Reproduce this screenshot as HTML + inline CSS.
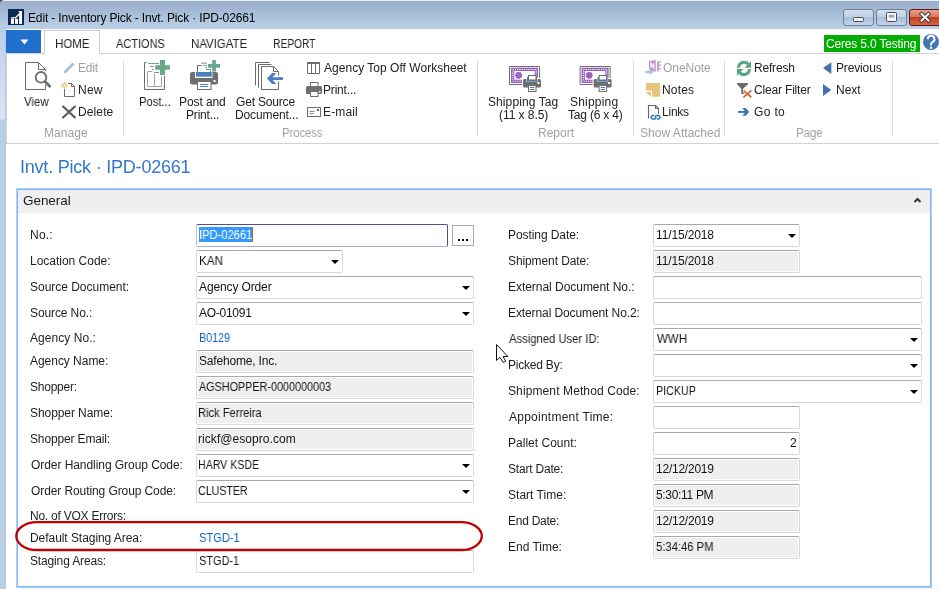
<!DOCTYPE html>
<html><head><meta charset="utf-8"><style>
html,body{margin:0;padding:0;}
body{width:939px;height:589px;position:relative;overflow:hidden;background:#fff;font-family:"Liberation Sans",sans-serif;}
.tx{position:absolute;white-space:pre;line-height:40px;height:40px;font-family:"Liberation Sans",sans-serif;will-change:transform;}
.abs{position:absolute;}
.fb{position:absolute;box-sizing:border-box;border:1px solid #d5d8e0;border-top-color:#a9a9a9;border-radius:2px;background:#fff;}
.fg{background:#efefef;box-shadow:inset 0 0 0 1px #fff;}
.ff{border-color:#4f4f98;border-bottom-color:#b0a8d4;border-left-color:#c0bce0;}
.arr{position:absolute;width:0;height:0;border-left:4px solid transparent;border-right:4px solid transparent;border-top:4.5px solid #000;}
</style></head><body>
<!-- title bar -->
<div class="abs" style="left:0;top:0;width:939px;height:29px;background:linear-gradient(#95acc7,#a7bcd6 45%,#b6cce4 85%,#b9d0e8);"></div>
<div class="abs" style="left:3px;top:0;width:936px;height:1px;background:#eef1f4;"></div>
<!-- left frame -->
<div class="abs" style="left:0;top:29px;width:6px;height:560px;background:linear-gradient(#bacfe8 0px,#dae6f3 90px,#b9cde5 91px,#b9cde5 560px);"></div>
<div class="abs" style="left:5px;top:29px;width:1px;height:560px;background:#b4cbe6;"></div>
<!-- tab bar -->
<div class="abs" style="left:6px;top:29px;width:933px;height:115px;background:#fff;"></div>
<div class="abs" style="left:6px;top:53px;width:933px;height:1px;background:#d4d4d4;"></div>
<div class="abs" style="left:6px;top:30px;width:35px;height:23px;background:#1f6fcd;"></div>
<div class="abs" style="left:44px;top:30px;width:56px;height:24px;box-sizing:border-box;border:1px solid #cfcfcf;border-bottom:none;background:#fff;"></div>
<div class="abs" style="left:824px;top:35px;width:96px;height:17px;background:#00ad00;"></div>
<!-- ribbon -->
<div class="abs" style="left:6px;top:53px;width:1px;height:91px;background:#d4d4d4;"></div>
<div class="abs" style="left:6px;top:143px;width:933px;height:1px;background:#d2d2d2;"></div>
<div class="abs" style="left:123px;top:61px;width:1px;height:75px;background:#d6d6d6;"></div>
<div class="abs" style="left:477px;top:61px;width:1px;height:75px;background:#d6d6d6;"></div>
<div class="abs" style="left:633px;top:61px;width:1px;height:75px;background:#d6d6d6;"></div>
<div class="abs" style="left:724px;top:61px;width:1px;height:75px;background:#d6d6d6;"></div>
<div class="abs" style="left:892px;top:61px;width:1px;height:75px;background:#d6d6d6;"></div>
<!-- panel -->
<div class="abs" style="left:16px;top:188px;width:916px;height:400px;background:#b2d1f9;"></div>
<div class="abs" style="left:17px;top:189px;width:914px;height:398px;box-sizing:border-box;border:1px solid #7fb3f6;background:#fff;"></div>
<div class="abs" style="left:16px;top:588px;width:923px;height:1px;background:#f0f0f0;"></div>
<div class="abs" style="left:18px;top:190px;width:912px;height:23px;background:#efefef;"></div>
<!-- selection -->
<div class='fb ff' style='left:196px;top:224px;width:252px;height:23px'></div>
<div class='fb' style='left:196px;top:250px;width:147px;height:23px'></div><div class='arr' style='left:330.5px;top:259.7px'></div>
<div class='fb' style='left:196px;top:276px;width:278px;height:23px'></div><div class='arr' style='left:461.5px;top:285.7px'></div>
<div class='fb' style='left:196px;top:302px;width:278px;height:23px'></div><div class='arr' style='left:461.5px;top:311.7px'></div>
<div class='fb fg' style='left:196px;top:350px;width:278px;height:23px'></div>
<div class='fb fg' style='left:196px;top:376px;width:278px;height:23px'></div>
<div class='fb fg' style='left:196px;top:402px;width:278px;height:23px'></div>
<div class='fb fg' style='left:196px;top:428px;width:278px;height:23px'></div>
<div class='fb' style='left:196px;top:454px;width:278px;height:23px'></div><div class='arr' style='left:461.5px;top:463.7px'></div>
<div class='fb' style='left:196px;top:480px;width:278px;height:23px'></div><div class='arr' style='left:461.5px;top:489.7px'></div>
<div class='fb' style='left:196px;top:550px;width:278px;height:23px'></div>
<div class='fb' style='left:653px;top:224px;width:147px;height:23px'></div><div class='arr' style='left:787.5px;top:233.7px'></div>
<div class='fb fg' style='left:653px;top:250px;width:147px;height:23px'></div>
<div class='fb' style='left:653px;top:276px;width:269px;height:23px'></div>
<div class='fb' style='left:653px;top:302px;width:269px;height:23px'></div>
<div class='fb' style='left:653px;top:328px;width:269px;height:23px'></div><div class='arr' style='left:909.5px;top:337.7px'></div>
<div class='fb' style='left:653px;top:354px;width:269px;height:23px'></div><div class='arr' style='left:909.5px;top:363.7px'></div>
<div class='fb' style='left:653px;top:380px;width:269px;height:23px'></div><div class='arr' style='left:909.5px;top:389.7px'></div>
<div class='fb' style='left:653px;top:406px;width:147px;height:23px'></div>
<div class='fb' style='left:653px;top:432px;width:147px;height:23px'></div>
<div class='fb fg' style='left:653px;top:458px;width:147px;height:23px'></div>
<div class='fb fg' style='left:653px;top:484px;width:147px;height:23px'></div>
<div class='fb fg' style='left:653px;top:510px;width:147px;height:23px'></div>
<div class='fb fg' style='left:653px;top:536px;width:147px;height:23px'></div>
<div class="abs" style="left:198.7px;top:227px;width:54px;height:15px;background:#3399ff;"></div>
<div class="abs" style="left:452px;top:225px;width:22px;height:21px;box-sizing:border-box;border:1px solid #ababab;background:#fff;"></div>
<div class='tx' style='left:27.50px;top:-2.16px;font-size:12px;color:#000;letter-spacing:-0.149px;'>Edit - Inventory Pick - Invt. Pick · IPD-02661</div>
<div class='tx' style='left:54.80px;top:23.84px;font-size:12px;color:#222;transform:scaleX(0.9543);transform-origin:1px 0;'>HOME</div>
<div class='tx' style='left:115.90px;top:23.84px;font-size:12px;color:#222;transform:scaleX(0.9151);transform-origin:0px 0;'>ACTIONS</div>
<div class='tx' style='left:190.80px;top:23.84px;font-size:12px;color:#222;transform:scaleX(0.9517);transform-origin:1px 0;'>NAVIGATE</div>
<div class='tx' style='left:272.90px;top:23.84px;font-size:12px;color:#222;transform:scaleX(0.8490);transform-origin:1px 0;'>REPORT</div>
<div class='tx' style='left:826.10px;top:23.84px;font-size:12px;color:#fff;letter-spacing:-0.169px;'>Ceres 5.0 Testing</div>
<div class='tx' style='left:23.70px;top:81.84px;font-size:12px;color:#222;transform:scaleX(0.9500);transform-origin:0px 0;'>View</div>
<div class='tx' style='left:78.40px;top:47.84px;font-size:12px;color:#a0a0a0;letter-spacing:-0.233px;'>Edit</div>
<div class='tx' style='left:78.40px;top:69.84px;font-size:12px;color:#222;letter-spacing:0.250px;'>New</div>
<div class='tx' style='left:78.40px;top:91.84px;font-size:12px;color:#222;letter-spacing:0.120px;'>Delete</div>
<div class='tx' style='left:43.80px;top:112.84px;font-size:12px;color:#a0a0a0;letter-spacing:0.040px;'>Manage</div>
<div class='tx' style='left:138.80px;top:81.84px;font-size:12px;color:#222;transform:scaleX(0.9281);transform-origin:1px 0;'>Post...</div>
<div class='tx' style='left:178.60px;top:81.84px;font-size:12px;color:#222;letter-spacing:-0.086px;'>Post and</div>
<div class='tx' style='left:186.30px;top:94.84px;font-size:12px;color:#222;letter-spacing:-0.186px;'>Print...</div>
<div class='tx' style='left:235.60px;top:81.84px;font-size:12px;color:#222;letter-spacing:-0.178px;'>Get Source</div>
<div class='tx' style='left:234.60px;top:94.84px;font-size:12px;color:#222;letter-spacing:-0.110px;'>Document...</div>
<div class='tx' style='left:281.70px;top:112.84px;font-size:12px;color:#a0a0a0;transform:scaleX(0.9310);transform-origin:1px 0;'>Process</div>
<div class='tx' style='left:324.00px;top:47.84px;font-size:12px;color:#222;letter-spacing:0.026px;'>Agency Top Off Worksheet</div>
<div class='tx' style='left:323.00px;top:69.84px;font-size:12px;color:#222;letter-spacing:-0.186px;'>Print...</div>
<div class='tx' style='left:323.00px;top:91.84px;font-size:12px;color:#222;letter-spacing:0.140px;'>E-mail</div>
<div class='tx' style='left:487.70px;top:81.84px;font-size:12px;color:#222;letter-spacing:0.091px;'>Shipping Tag</div>
<div class='tx' style='left:499.40px;top:94.84px;font-size:12px;color:#222;letter-spacing:-0.056px;'>(11 x 8.5)</div>
<div class='tx' style='left:570.00px;top:81.84px;font-size:12px;color:#222;letter-spacing:0.200px;'>Shipping</div>
<div class='tx' style='left:568.00px;top:94.84px;font-size:12px;color:#222;letter-spacing:-0.200px;'>Tag (6 x 4)</div>
<div class='tx' style='left:538.30px;top:112.84px;font-size:12px;color:#a0a0a0;letter-spacing:0.000px;'>Report</div>
<div class='tx' style='left:662.70px;top:47.84px;font-size:12px;color:#a0a0a0;letter-spacing:-0.050px;'>OneNote</div>
<div class='tx' style='left:661.70px;top:69.84px;font-size:12px;color:#222;letter-spacing:0.175px;'>Notes</div>
<div class='tx' style='left:661.70px;top:91.84px;font-size:12px;color:#222;letter-spacing:-0.225px;'>Links</div>
<div class='tx' style='left:639.60px;top:112.84px;font-size:12px;color:#a0a0a0;letter-spacing:0.033px;'>Show Attached</div>
<div class='tx' style='left:753.50px;top:47.84px;font-size:12px;color:#222;letter-spacing:-0.183px;'>Refresh</div>
<div class='tx' style='left:753.50px;top:69.84px;font-size:12px;color:#222;letter-spacing:-0.173px;'>Clear Filter</div>
<div class='tx' style='left:753.50px;top:91.84px;font-size:12px;color:#222;letter-spacing:0.350px;'>Go to</div>
<div class='tx' style='left:836.30px;top:47.84px;font-size:12px;color:#222;letter-spacing:-0.143px;'>Previous</div>
<div class='tx' style='left:836.30px;top:69.84px;font-size:12px;color:#222;letter-spacing:0.000px;'>Next</div>
<div class='tx' style='left:796.40px;top:112.84px;font-size:12px;color:#a0a0a0;transform:scaleX(0.9481);transform-origin:1px 0;'>Page</div>
<div class='tx' style='left:19.50px;top:146.76px;font-size:18px;color:#3279cc;letter-spacing:-0.214px;'>Invt. Pick · IPD-02661</div>
<div class='tx' style='left:22.80px;top:181.32px;font-size:13.5px;color:#1a1a1a;letter-spacing:-0.050px;'>General</div>
<div class='tx' style='left:29.50px;top:214.84px;font-size:12px;color:#1e1e1e;letter-spacing:0.233px;'>No.:</div>
<div class='tx' style='left:29.50px;top:240.84px;font-size:12px;color:#1e1e1e;letter-spacing:-0.015px;'>Location Code:</div>
<div class='tx' style='left:29.50px;top:266.84px;font-size:12px;color:#1e1e1e;letter-spacing:-0.020px;'>Source Document:</div>
<div class='tx' style='left:29.50px;top:292.84px;font-size:12px;color:#1e1e1e;letter-spacing:-0.110px;'>Source No.:</div>
<div class='tx' style='left:29.80px;top:317.84px;font-size:12px;color:#1e1e1e;letter-spacing:0.050px;'>Agency No.:</div>
<div class='tx' style='left:29.80px;top:340.84px;font-size:12px;color:#1e1e1e;letter-spacing:-0.036px;'>Agency Name:</div>
<div class='tx' style='left:29.50px;top:366.84px;font-size:12px;color:#1e1e1e;letter-spacing:-0.229px;'>Shopper:</div>
<div class='tx' style='left:29.50px;top:392.84px;font-size:12px;color:#1e1e1e;letter-spacing:-0.075px;'>Shopper Name:</div>
<div class='tx' style='left:29.50px;top:418.84px;font-size:12px;color:#1e1e1e;letter-spacing:-0.146px;'>Shopper Email:</div>
<div class='tx' style='left:30.50px;top:444.84px;font-size:12px;color:#1e1e1e;letter-spacing:-0.060px;'>Order Handling Group Code:</div>
<div class='tx' style='left:30.50px;top:470.84px;font-size:12px;color:#1e1e1e;letter-spacing:-0.092px;'>Order Routing Group Code:</div>
<div class='tx' style='left:29.50px;top:495.84px;font-size:12px;color:#1e1e1e;letter-spacing:-0.235px;'>No. of VOX Errors:</div>
<div class='tx' style='left:29.50px;top:517.84px;font-size:12px;color:#1e1e1e;letter-spacing:-0.055px;'>Default Staging Area:</div>
<div class='tx' style='left:29.50px;top:540.84px;font-size:12px;color:#1e1e1e;letter-spacing:-0.146px;'>Staging Areas:</div>
<div class='tx' style='left:507.90px;top:214.84px;font-size:12px;color:#1e1e1e;letter-spacing:-0.075px;'>Posting Date:</div>
<div class='tx' style='left:507.90px;top:240.84px;font-size:12px;color:#1e1e1e;letter-spacing:-0.100px;'>Shipment Date:</div>
<div class='tx' style='left:507.90px;top:266.84px;font-size:12px;color:#1e1e1e;letter-spacing:-0.038px;'>External Document No.:</div>
<div class='tx' style='left:507.90px;top:292.84px;font-size:12px;color:#1e1e1e;letter-spacing:-0.100px;'>External Document No.2:</div>
<div class='tx' style='left:508.90px;top:318.84px;font-size:12px;color:#1e1e1e;transform:scaleX(0.9375);transform-origin:0px 0;'>Assigned User ID:</div>
<div class='tx' style='left:507.90px;top:344.84px;font-size:12px;color:#1e1e1e;letter-spacing:-0.211px;'>Picked By:</div>
<div class='tx' style='left:507.90px;top:370.84px;font-size:12px;color:#1e1e1e;letter-spacing:0.110px;'>Shipment Method Code:</div>
<div class='tx' style='left:508.90px;top:396.84px;font-size:12px;color:#1e1e1e;letter-spacing:0.250px;'>Appointment Time:</div>
<div class='tx' style='left:507.90px;top:422.84px;font-size:12px;color:#1e1e1e;letter-spacing:0.017px;'>Pallet Count:</div>
<div class='tx' style='left:507.90px;top:448.84px;font-size:12px;color:#1e1e1e;letter-spacing:-0.200px;'>Start Date:</div>
<div class='tx' style='left:507.90px;top:474.84px;font-size:12px;color:#1e1e1e;letter-spacing:0.020px;'>Start Time:</div>
<div class='tx' style='left:507.90px;top:500.84px;font-size:12px;color:#1e1e1e;letter-spacing:-0.263px;'>End Date:</div>
<div class='tx' style='left:507.90px;top:526.84px;font-size:12px;color:#1e1e1e;letter-spacing:-0.013px;'>End Time:</div>
<div class='tx' style='left:198.50px;top:214.84px;font-size:12px;color:#fff;transform:scaleX(0.9286);transform-origin:1px 0;'>IPD-02661</div>
<div class='tx' style='left:198.80px;top:240.84px;font-size:12px;color:#141414;transform:scaleX(0.9696);transform-origin:1px 0;'>KAN</div>
<div class='tx' style='left:199.10px;top:266.84px;font-size:12px;color:#141414;letter-spacing:-0.127px;'>Agency Order</div>
<div class='tx' style='left:199.40px;top:292.84px;font-size:12px;color:#141414;letter-spacing:-0.271px;'>AO-01091</div>
<div class='tx' style='left:198.70px;top:317.84px;font-size:12px;color:#0d62c8;transform:scaleX(0.8909);transform-origin:1px 0;'>B0129</div>
<div class='tx' style='left:198.60px;top:340.84px;font-size:12px;color:#141414;letter-spacing:-0.177px;'>Safehome, Inc.</div>
<div class='tx' style='left:199.40px;top:366.84px;font-size:12px;color:#141414;transform:scaleX(0.9000);transform-origin:0px 0;'>AGSHOPPER-0000000003</div>
<div class='tx' style='left:198.30px;top:392.84px;font-size:12px;color:#141414;transform:scaleX(0.9250);transform-origin:1px 0;'>Rick Ferreira</div>
<div class='tx' style='left:198.30px;top:418.84px;font-size:12px;color:#141414;letter-spacing:0.060px;'>rickf@esopro.com</div>
<div class='tx' style='left:198.30px;top:444.84px;font-size:12px;color:#141414;transform:scaleX(0.8809);transform-origin:1px 0;'>HARV KSDE</div>
<div class='tx' style='left:198.30px;top:470.84px;font-size:12px;color:#141414;transform:scaleX(0.8852);transform-origin:1px 0;'>CLUSTER</div>
<div class='tx' style='left:198.60px;top:517.84px;font-size:12px;color:#0d62c8;transform:scaleX(0.9233);transform-origin:1px 0;'>STGD-1</div>
<div class='tx' style='left:198.60px;top:540.84px;font-size:12px;color:#141414;transform:scaleX(0.9116);transform-origin:1px 0;'>STGD-1</div>
<div class='tx' style='left:655.50px;top:214.84px;font-size:12px;color:#141414;letter-spacing:-0.133px;'>11/15/2018</div>
<div class='tx' style='left:655.50px;top:240.84px;font-size:12px;color:#141414;letter-spacing:-0.133px;'>11/15/2018</div>
<div class='tx' style='left:656.50px;top:318.84px;font-size:12px;color:#141414;transform:scaleX(0.9581);transform-origin:0px 0;'>WWH</div>
<div class='tx' style='left:655.90px;top:370.84px;font-size:12px;color:#141414;transform:scaleX(0.8884);transform-origin:1px 0;'>PICKUP</div>
<div class='tx' style='left:790.40px;top:422.84px;font-size:12px;color:#141414;letter-spacing:0.000px;'>2</div>
<div class='tx' style='left:655.50px;top:448.84px;font-size:12px;color:#141414;letter-spacing:-0.233px;'>12/12/2019</div>
<div class='tx' style='left:655.50px;top:474.84px;font-size:12px;color:#141414;letter-spacing:-0.322px;'>5:30:11 PM</div>
<div class='tx' style='left:655.50px;top:500.84px;font-size:12px;color:#141414;letter-spacing:-0.233px;'>12/12/2019</div>
<div class='tx' style='left:655.50px;top:526.84px;font-size:12px;color:#141414;transform:scaleX(0.9350);transform-origin:1px 0;'>5:34:46 PM</div>
<svg class="abs" style="left:0;top:0;pointer-events:none" width="939" height="589" viewBox="0 0 939 589">
<!-- app icon -->
<path d="M0,3.5 A3.5,3.5 0 0 1 3.5,0 H0 Z" fill="#2a2a2a"/>
<rect x="8" y="9" width="16" height="16" fill="#0d2b58"/>
<rect x="10.9" y="18.9" width="3.1" height="5" fill="#fff"/>
<rect x="15" y="18.9" width="3" height="5" fill="#fff"/>
<rect x="19.1" y="13.2" width="2.9" height="10.7" fill="#fff"/>
<path d="M10.9,17.8 H15.6 L20.3,12.8" stroke="#fff" stroke-width="1.3" fill="none"/>
<path d="M18.2,11 H22 V14.8 Z" fill="#fff"/>
<!-- app menu triangle -->
<path d="M20.5,39.5 H28.5 L24.5,44.5 Z" fill="#fff"/>
<!-- help circle -->
<circle cx="931" cy="42" r="8" fill="#4677b5"/>
<path d="M927.9,39.2 A3.3,3.3 0 1 1 932.6,42 Q931,43 931,44.6 V45.2" stroke="#fff" stroke-width="2" fill="none"/>
<rect x="929.9" y="46.6" width="2.2" height="2.2" fill="#fff"/>
<!-- window buttons -->
<defs>
<linearGradient id="wb" x1="0" y1="0" x2="0" y2="1"><stop offset="0" stop-color="#d3e0ef"/><stop offset="0.45" stop-color="#c0d1e6"/><stop offset="0.5" stop-color="#a9bfd9"/><stop offset="1" stop-color="#c3d5ea"/></linearGradient>
<linearGradient id="cb" x1="0" y1="0" x2="0" y2="1"><stop offset="0" stop-color="#eaa595"/><stop offset="0.45" stop-color="#d8755f"/><stop offset="0.5" stop-color="#c0401e"/><stop offset="1" stop-color="#d76a45"/></linearGradient>
</defs>
<rect x="843.5" y="9.5" width="30" height="16" rx="2.5" fill="url(#wb)" stroke="#6d7f98"/>
<rect x="876.5" y="9.5" width="30" height="16" rx="2.5" fill="url(#wb)" stroke="#6d7f98"/>
<rect x="909.5" y="9.5" width="34" height="16" rx="2.5" fill="url(#cb)" stroke="#5a1a1a"/>
<rect x="853.5" y="17.5" width="10" height="4" rx="1" fill="#f2f2f2" stroke="#3c3c3c" stroke-width="0.9"/>
<rect x="886.5" y="12.5" width="10" height="9" rx="1" fill="#f2f2f2" stroke="#3c3c3c" stroke-width="0.9"/>
<rect x="889" y="15" width="5" height="2.5" fill="#8aa2c4"/>
<path d="M921.5,14 L928.5,20.5 M928.5,14 L921.5,20.5" stroke="#3c3c3c" stroke-width="3.8" stroke-linecap="square"/>
<path d="M921.5,14 L928.5,20.5 M928.5,14 L921.5,20.5" stroke="#f4f4f4" stroke-width="2" stroke-linecap="square"/>

<!-- View icon -->
<g fill="none" stroke="#6b6b6b" stroke-width="1">
<path d="M45.5,84.5 V89.5 H25.5 V62.5 H38.5 L45.5,69.5 V71"/>
<path d="M38.5,62.5 V69.5 H45.5"/>
<circle cx="41" cy="77.3" r="5.3" stroke-width="1.8"/>
</g>
<path d="M45,81.5 L50.5,87" stroke="#6b6b6b" stroke-width="2.6"/>
<!-- Edit pencil -->
<path d="M65,72 L73.5,63.5" stroke="#a5c1df" stroke-width="3"/>
<path d="M63.5,73.5 L64.3,70.8 L66.2,72.7 Z" fill="#a5c1df"/>
<!-- New -->
<g fill="none" stroke="#6b6b6b" stroke-width="1">
<path d="M68,83.5 H71.5 L74.5,86.5 V96.5 H64.5 V89"/>
<path d="M71.5,83.5 V86.5 H74.5"/>
</g>
<g stroke="#f2b05a" stroke-width="0.9"><path d="M64.4,82 V88.8 M61,85.4 H67.8 M62,83 L66.8,87.8 M66.8,83 L62,87.8"/></g>
<circle cx="64.4" cy="85.4" r="1.5" fill="#fff" stroke="#f2b05a" stroke-width="0.9"/>
<!-- Delete X -->
<path d="M62.5,118 L75.5,106 M62.5,106 L75.5,118" stroke="#595959" stroke-width="2.2"/>

<!-- Post -->
<g fill="none" stroke="#6b6b6b" stroke-width="1">
<path d="M146.5,62.5 H144.5 V89.5 H164.5 V76"/>
</g>
<g fill="none" stroke="#a3a3a3" stroke-width="1">
<path d="M152.5,71.5 H147.5 V86.5 H161.5 V76.5 M154.5,74 V86.5"/>
</g>
<g fill="#6aa68a">
<rect x="160" y="60" width="5" height="15"/>
<rect x="155.3" y="65.2" width="14.6" height="4.5"/>
<rect x="148" y="63" width="11" height="1"/>
<rect x="150" y="66" width="4" height="1"/>
<rect x="152" y="69" width="2" height="1"/>
<rect x="154" y="72" width="5" height="1"/>
</g>
<!-- Post and print -->
<rect x="190" y="72" width="28" height="12.5" rx="2" fill="#6f6f6f"/>
<rect x="195" y="72" width="17.5" height="6" fill="#fff"/>
<rect x="196" y="72" width="15.8" height="4.7" fill="#4a7fc0"/>
<rect x="197.5" y="81.5" width="13.5" height="8" fill="#fff" stroke="#6f6f6f"/>
<rect x="200" y="84" width="8" height="1" fill="#4a7fc0"/>
<rect x="200" y="86" width="8" height="1" fill="#4a7fc0"/>
<rect x="213.5" y="80" width="2" height="2" fill="#fff"/>
<path d="M201.5,65.5 H197.5 V72 M210.5,70.5 V72" stroke="#6f6f6f" fill="none"/>
<rect x="197.5" y="66" width="13" height="6" fill="#fff"/>
<path d="M201.5,65.5 H197.5 V72 M210.5,71 V72.5" stroke="#6f6f6f" fill="none"/>
<g fill="#6aa68a">
<rect x="212.2" y="60" width="3.7" height="11.6"/>
<rect x="208" y="64" width="12" height="3.7"/>
<rect x="201" y="62.7" width="6" height="1"/>
<rect x="203" y="64.9" width="4" height="1"/>
<rect x="205" y="67" width="2" height="1"/>
<rect x="206" y="69" width="5" height="1"/>
</g>
<!-- Get source document -->
<g fill="none" stroke="#6b6b6b" stroke-width="1">
<path d="M255.5,85.5 V62.5 H269.5"/>
<path d="M258.5,87.5 V64.5 H271.5"/>
<path d="M278.5,75.5 V71.5 L273.5,66.5 H261.5 V89.5 H278.5 V81.5"/>
<path d="M273.5,66.5 V71.5 H278.5"/>
</g>
<path d="M267,78.5 L272,73 H276.2 L271.5,78.5 L276.2,84 H272 Z" fill="#4a7fc0"/>
<rect x="271" y="77.2" width="12" height="2.8" fill="#4a7fc0"/>
<!-- grid icon -->
<g fill="none" stroke="#6b6b6b" stroke-width="1">
<path d="M307.5,63.5 V73.5 H319.5 V63.5 M311.5,64 V73 M315.5,64 V73"/>
</g>
<rect x="307" y="62" width="13" height="2" fill="#6b6b6b"/>
<!-- print small -->
<rect x="306" y="86" width="16" height="8" rx="1.5" fill="#6f6f6f"/>
<rect x="310.5" y="82.5" width="7.5" height="4" fill="#fff" stroke="#6f6f6f"/>
<rect x="310.5" y="91.5" width="7.5" height="5" fill="#fff" stroke="#6f6f6f"/>
<rect x="319" y="91" width="1.5" height="1.5" fill="#fff"/>
<!-- email -->
<rect x="307.5" y="107.5" width="13" height="9" fill="#fff" stroke="#6f6f6f"/>
<rect x="317" y="109" width="2" height="2" fill="#2e6fc0"/>
<rect x="309.5" y="111" width="5" height="1" fill="#8a8a8a"/>
<rect x="309.5" y="113" width="4" height="1" fill="#8a8a8a"/>
<!-- shipping tags -->
<g id="tag">
<path d="M526,84.5 H509.5 V66.5 H539.5 V78" fill="none" stroke="#6f6f6f"/>
<rect x="511" y="67.7" width="27" height="15.3" fill="#9a62bd"/>
<rect x="512.8" y="69.5" width="23.4" height="11.7" fill="none" stroke="#fff" stroke-width="1.1" stroke-dasharray="1.1 1.1"/>
<rect x="514.3" y="71" width="20.4" height="8.7" fill="#fff"/>
<circle cx="518.6" cy="75.3" r="3.4" fill="#9a62bd"/>
<rect x="522" y="78" width="20" height="10.5" rx="1.5" fill="#fff"/>
<rect x="523" y="79" width="18" height="8.6" rx="1.5" fill="#6f6f6f"/>
<rect x="526.5" y="77" width="11" height="4.5" fill="#fff"/>
<rect x="527" y="77" width="10" height="4.4" fill="#4a7fc0"/>
<rect x="528.5" y="75.5" width="7.5" height="4.5" fill="#fff" stroke="#6f6f6f"/>
<rect x="528.5" y="85.5" width="7.5" height="6" fill="#fff" stroke="#6f6f6f"/>
<rect x="530" y="87" width="4.5" height="1" fill="#4a7fc0"/>
<rect x="530" y="89" width="4.5" height="1" fill="#4a7fc0"/>
<rect x="537.5" y="82" width="2" height="2" fill="#fff"/>
</g>
<use href="#tag" x="70.6" y="0"/>
<!-- OneNote -->
<path d="M649,61 L655.8,60 V71.8 L649,70.5 Z" fill="#c596ca"/>
<path d="M651,68 V63.3 L653.8,68 V63.3" stroke="#fff" stroke-width="1.1" fill="none"/>
<rect x="657.1" y="61.3" width="3.6" height="10" fill="#c596ca"/>
<rect x="658.9" y="62.6" width="1.8" height="2" fill="#fff"/>
<rect x="658.9" y="66" width="1.8" height="2" fill="#fff"/>
<rect x="658.9" y="69.3" width="1.8" height="2" fill="#fff"/>
<path d="M644.9,72 H651" stroke="#fff" stroke-width="4"/>
<path d="M645,72 H650.5" stroke="#a6c3e2" stroke-width="2.2"/>
<path d="M649.3,68.8 L653.3,72 L649.3,75.2 Z" fill="#a6c3e2"/>
<!-- Notes -->
<path d="M646,83 H660 V96.8 H652.1 V90.6 H646 Z" fill="#e9c27c"/>
<path d="M646,92 H650.9 V96.8 Z" fill="#e9c27c"/>
<!-- Links -->
<path d="M648.5,118.6 V105.5 H655.5 L658.5,108.5 V113.8" fill="none" stroke="#666" stroke-width="1.1"/>
<path d="M655.5,105.5 V108.5 H658.5" fill="none" stroke="#666" stroke-width="1.1"/>
<path d="M654,115.6 H652.3 L650.9,117.3 L652.3,119.1 H655 L656.3,117.3" fill="none" stroke="#3d76bc" stroke-width="1.5"/>
<path d="M656.9,119.1 H658.8 L660.2,117.3 L658.8,115.6 H656.1 L654.8,117.3" fill="none" stroke="#3d76bc" stroke-width="1.5"/>
<!-- refresh -->
<path d="M738.6,67.7 A5.4,5.4 0 0 1 748.5,64.7" fill="none" stroke="#5aa584" stroke-width="3"/>
<path d="M751,61.2 V67.7 H744.5 Z" fill="#5aa584"/>
<path d="M749.4,69.1 A5.4,5.4 0 0 1 739.5,72.1" fill="none" stroke="#5aa584" stroke-width="3"/>
<path d="M737,75.6 V69.1 H743.5 Z" fill="#5aa584"/>
<!-- clear filter -->
<path d="M737,83 H748 V84.3 L743,88.8 V93.6 H741.3 V88.8 L737,84.3 Z" fill="#6b6b6b"/>
<rect x="741.3" y="92.6" width="3.2" height="1.2" fill="#6b6b6b"/>
<path d="M743.6,90.6 L751.4,97.4 M751.4,90.4 L743.4,97.4" stroke="#fff" stroke-width="2.6"/>
<path d="M743.6,90.6 L751.4,97.4 M751.4,90.4 L743.4,97.4" stroke="#e05a30" stroke-width="1.5"/>
<!-- goto arrow -->
<rect x="738.1" y="111" width="8" height="1.9" fill="#3d72b5"/>
<path d="M742.2,108.1 H745.7 L749.2,111.95 L745.7,115.8 H742.2 L745.7,111.95 Z" fill="#3d72b5"/>
<!-- prev next -->
<path d="M831.3,62.3 V74 L823,68.1 Z" fill="#4274b4"/>
<path d="M823,84 V96 L831.3,90 Z" fill="#4274b4"/>
<!-- chevron -->
<path d="M914.5,202 L917.5,199 L920.5,202" stroke="#333" stroke-width="2" fill="none"/>
<!-- dots -->
<rect x="458" y="239" width="2" height="2" fill="#000"/>
<rect x="462" y="239" width="2" height="2" fill="#000"/>
<rect x="466" y="239" width="2" height="2" fill="#000"/>
<!-- caret -->
<rect x="252" y="227" width="1" height="15" fill="#d06010"/>
<!-- red ellipse -->
<rect x="16.3" y="522.2" width="465.5" height="27.8" rx="20.5" ry="14" fill="none" stroke="#c00000" stroke-width="2.3"/>
<!-- cursor -->
<path d="M496.5,344.5 V360.5 L500,357.3 L503.3,362.5 L505.7,361.2 L503.1,356.6 L507.8,356.4 Z" fill="#fff" stroke="#111" stroke-width="1" stroke-linejoin="miter"/>
</svg>

</body></html>
